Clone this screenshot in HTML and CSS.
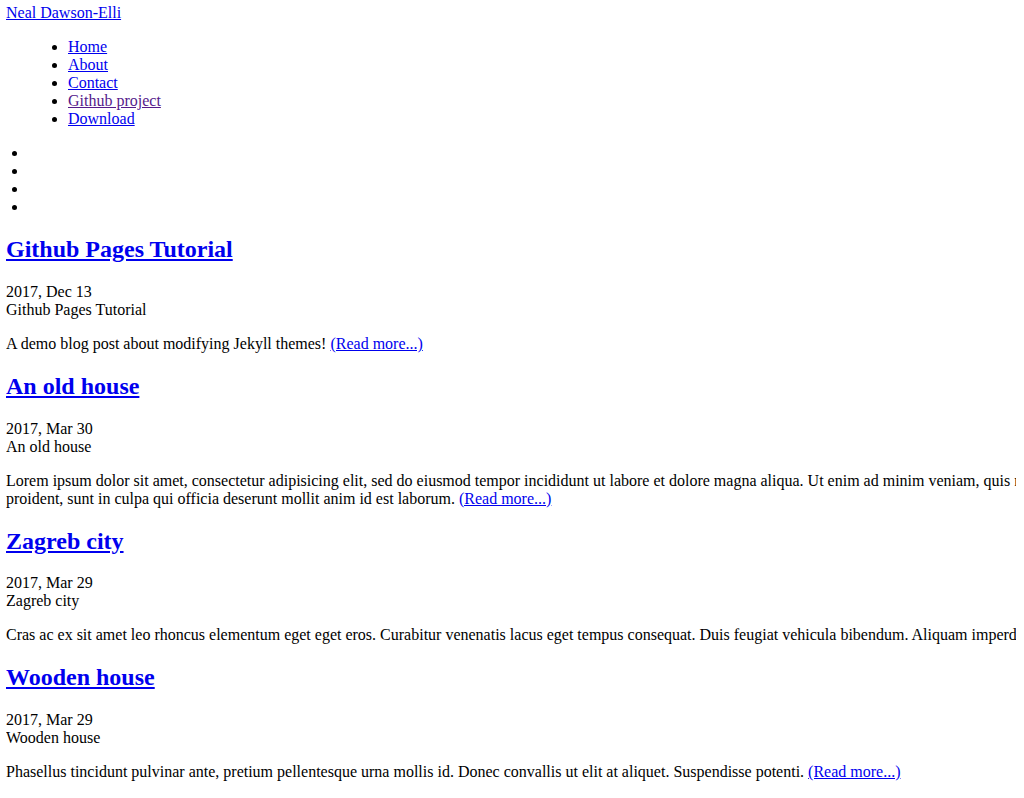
FILE: index.html
```html
<!DOCTYPE html>
<html>
<head>
<meta charset="utf-8">
<title>Neal Dawson-Elli</title>
<link rel="stylesheet" href="styles.css">
</head>
<body>
<header class="site-header">
  <div class="site-title"><a href="#">Neal Dawson-Elli</a></div>
  <ul class="site-nav">
    <li><a href="#">Home</a></li>
    <li><a href="#">About</a></li>
    <li><a href="#">Contact</a></li>
    <li><a href="#" class="visited">Github project</a></li>
    <li><a href="#">Download</a></li>
  </ul>
  <ul class="social">
    <li></li>
    <li></li>
    <li></li>
    <li></li>
  </ul>
</header>
<main class="posts">
  <article class="post">
    <h2 class="post-title"><a href="#">Github Pages Tutorial</a></h2>
    <div class="post-meta">2017, Dec 13</div>
    <div class="post-sub">Github Pages Tutorial</div>
    <p class="excerpt">A demo blog post about modifying Jekyll themes! <a href="#">(Read more...)</a></p>
  </article>
  <article class="post">
    <h2 class="post-title"><a href="#">An old house</a></h2>
    <div class="post-meta">2017, Mar 30</div>
    <div class="post-sub">An old house</div>
    <p class="excerpt">Lorem ipsum dolor sit amet, consectetur adipisicing elit, sed do eiusmod tempor incididunt ut labore et dolore magna aliqua. Ut enim ad minim veniam, quis nostrud exercitation ullamco laboris nisi ut aliquip ex ea commodo consequat. Duis aute irure dolor in reprehenderit in voluptate velit esse cillum dolore eu fugiat nulla pariatur. Excepteur sint occaecat cupidatat non<br>proident, sunt in culpa qui officia deserunt mollit anim id est laborum. <a href="#">(Read more...)</a></p>
  </article>
  <article class="post">
    <h2 class="post-title"><a href="#">Zagreb city</a></h2>
    <div class="post-meta">2017, Mar 29</div>
    <div class="post-sub">Zagreb city</div>
    <p class="excerpt">Cras ac ex sit amet leo rhoncus elementum eget eget eros. Curabitur venenatis lacus eget tempus consequat. Duis feugiat vehicula bibendum. Aliquam imperdiet tincidunt ligula, vel pretium nisl ornare vitae. <a href="#">(Read more...)</a></p>
  </article>
  <article class="post">
    <h2 class="post-title"><a href="#">Wooden house</a></h2>
    <div class="post-meta">2017, Mar 29</div>
    <div class="post-sub">Wooden house</div>
    <p class="excerpt">Phasellus tincidunt pulvinar ante, pretium pellentesque urna mollis id. Donec convallis ut elit at aliquet. Suspendisse potenti. <a href="#">(Read more...)</a></p>
  </article>
</main>
</body>
</html>
```
FILE: styles.css
```css
html {
  overflow: hidden;
}
body {
  margin: 4px 8px 8px 6px;
  font-family: "Liberation Serif", "Times New Roman", serif;
  font-size: 16px;
  color: #000;
  background: #fff;
}
a {
  color: #0000ee;
}
a.visited {
  color: #551a8b;
}
.site-nav {
  padding-left: 62px;
}
.social {
  padding-left: 22px;
}
.post-title {
  font-size: 24px;
  font-weight: bold;
}
.excerpt {
  white-space: nowrap;
}
```
